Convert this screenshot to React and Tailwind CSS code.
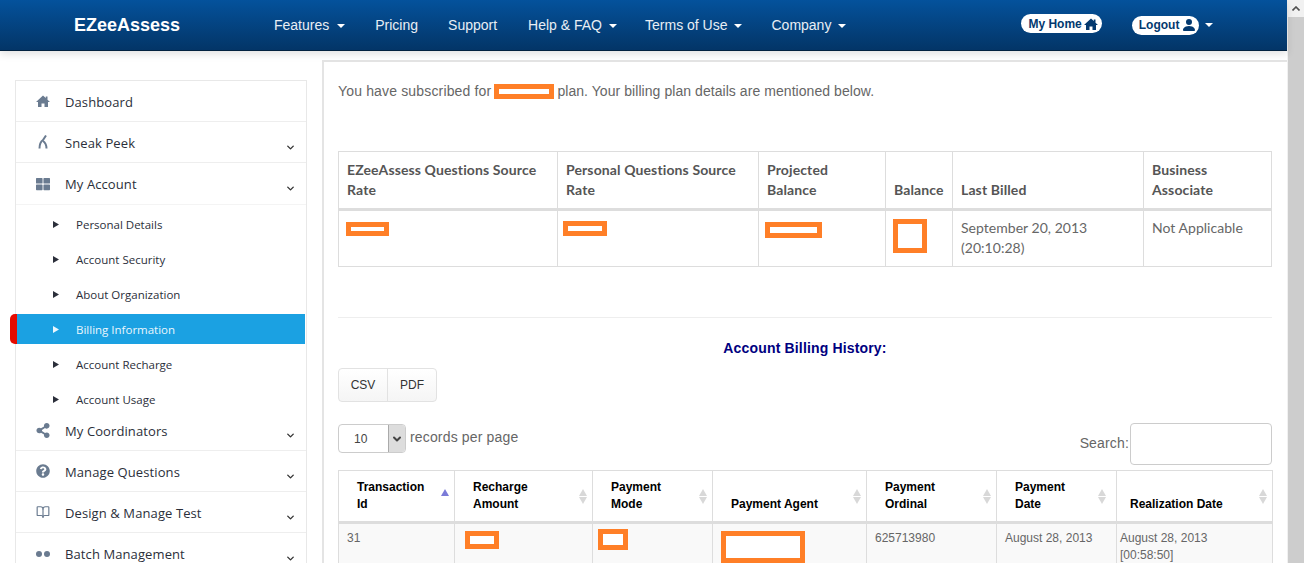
import { FaThLarge, FaShareAlt, FaQuestionCircle } from 'react-icons/fa'
import { BsPersonFill } from 'react-icons/bs'
import { LuBookOpen } from 'react-icons/lu'
import { FiChevronDown } from 'react-icons/fi'

const sans = "font-['Liberation_Sans',Arial,sans-serif]"
const ui = "font-['Open_Sans','Noto_Sans',sans-serif]"
const plan = "font-['Lato','Open_Sans',sans-serif]"

function Caret({ className = 'ml-2' }) {
  return <span className={`inline-block w-0 h-0 align-middle border-x-4 border-x-transparent border-t-4 border-t-white ${className}`} />
}

function NavLink({ label, caret, className = '', caretClass }) {
  return (
    <span className={`text-[14px] text-[#e8eef5] whitespace-nowrap ${className}`}>
      {label}
      {caret && <Caret className={caretClass} />}
    </span>
  )
}

function Redact({ className = '' }) {
  return <span className={`block border-[5px] border-[#ff7f27] bg-white ${className}`} />
}

function House({ size = 14, color = '#6a7b90' }) {
  return (
    <svg width={size} height={size} viewBox="0 0 14 14" fill={color}>
      <path d="M7 1.5 L0 8 H2 V13 H5.5 V9.5 H8.5 V13 H12 V8 H14 L11.5 5.7 V2.5 H9.8 V4 Z" />
    </svg>
  )
}

function Header() {
  return (
    <header className={`h-[51px] shrink-0 flex items-center bg-gradient-to-b from-[#04529c] to-[#033567] border-b border-[#02213f] shadow-[0_3px_8px_rgba(0,0,0,0.12)] relative ${sans}`}>
      <span className="ml-[74px] w-[200px] text-[18px] font-bold text-white">EZeeAssess</span>
      <nav className="flex items-center gap-[30px]">
        <NavLink label="Features" caret />
        <NavLink label="Pricing" />
        <NavLink label="Support" />
        <NavLink label="Help & FAQ" caret caretClass="ml-[7px]" className="ml-[1px]" />
        <NavLink label="Terms of Use" caret caretClass="ml-[7px]" className="-ml-[2px]" />
        <NavLink label="Company" caret caretClass="ml-[7px]" className="-ml-[1px]" />
      </nav>
      <span className="ml-[175px] flex items-center gap-[2px] h-[19px] pl-[7px] pr-[4px] rounded-full bg-white text-[#03396f] text-[12px] font-bold -mt-[3px]">
        My Home <House size={14} color="#03396f" />
      </span>
      <span className="ml-[30px] flex items-center gap-[2px] h-[19px] pl-[7px] pr-[2px] rounded-full bg-white text-[#03396f] text-[12px] font-bold">
        Logout <BsPersonFill className="text-[16px]" />
      </span>
      <Caret className="ml-[6px]" />
    </header>
  )
}

function Dots() {
  return (
    <svg width="14" height="6" viewBox="0 0 14 6" fill="#6a7b90">
      <circle cx="3" cy="3" r="3" />
      <circle cx="11" cy="3" r="3" />
    </svg>
  )
}

function Peek() {
  return (
    <svg width="10" height="14" viewBox="0 0 10 14" fill="none" stroke="#6a7b90" strokeWidth="2">
      <path d="M8 0.5 L5 5 C2 7 1.5 10 1.5 13.5" />
      <path d="M5 6 C8 8 8.5 11 8.5 13.5" />
    </svg>
  )
}

function MenuRow({ icon, label, chevron = true, border = true }) {
  return (
    <div className={`h-[41px] flex items-center pl-[20px] pr-[10px] ${border ? 'border-b border-[#eeeeee]' : ''}`}>
      <span className="w-[14px] flex justify-center text-[#6a7b90] text-[14px]">{icon}</span>
      <span className="ml-[15px] mt-[3px] flex-1 text-[13px] tracking-[0.1px] text-[#2b2f3a]">{label}</span>
      {chevron && <FiChevronDown className="text-[11px] mt-[10px] text-[#333] stroke-[3]" />}
    </div>
  )
}

function SubRow({ label, active }) {
  return (
    <div className={`h-[30px] mb-[5px] last:mb-0 flex items-center relative ${active ? 'ml-[1px] pl-[36px] bg-[#1ba1e2] text-[#eaf6fd] w-[288px]' : 'pl-[37px] text-[#2b2f3a]'}`}>
      {active && <span className="absolute -left-[7px] top-0 w-[7px] h-[30px] bg-[#e60c00] rounded-l-[5px]" />}
      <svg width="6" height="7" viewBox="0 0 6 7" fill="currentColor"><polygon points="0,0 6,3.5 0,7" /></svg>
      <span className="ml-[17px] mt-[1px] text-[11.5px]">{label}</span>
    </div>
  )
}

function Sidebar() {
  return (
    <aside className={`w-[322px] shrink-0 pt-[29px] pl-[15px] ${ui}`}>
      <div className="w-[292px] border border-[#e8e8e8] border-b-0">
        <MenuRow icon={<House />} label="Dashboard" chevron={false} />
        <MenuRow icon={<Peek />} label="Sneak Peek" />
        <MenuRow icon={<FaThLarge />} label="My Account" border={false} />
        <div className="pt-[4px] border-t border-[#f4f4f4]">
          <SubRow label="Personal Details" />
          <SubRow label="Account Security" />
          <SubRow label="About Organization" />
          <SubRow label="Billing Information" active />
          <SubRow label="Account Recharge" />
          <SubRow label="Account Usage" />
        </div>
        <div className="-mt-[4px]">
          <MenuRow icon={<FaShareAlt className="text-[15px]" />} label="My Coordinators" />
        </div>
        <MenuRow icon={<FaQuestionCircle />} label="Manage Questions" />
        <MenuRow icon={<LuBookOpen />} label="Design & Manage Test" />
        <MenuRow icon={<Dots />} label="Batch Management" border={false} />
      </div>
    </aside>
  )
}

function PlanTable() {
  const th = 'border border-[#dddddd] border-b-[3px] px-[8px] py-[8px] align-bottom text-left text-[14px] leading-[20px] font-bold tracking-[0.12px] text-[#555555]'
  const td = 'border border-[#dddddd] px-[8px] pt-[7px] pb-[8px] align-top text-[14px] leading-[20px] tracking-[0.03px] text-[#666666] h-[56px]'
  return (
    <table className={`w-[933px] table-fixed border-collapse mt-[50px] ${plan}`}>
      <colgroup>
        <col className="w-[219px]" />
        <col className="w-[201px]" />
        <col className="w-[127px]" />
        <col className="w-[67px]" />
        <col className="w-[191px]" />
        <col className="w-[128px]" />
      </colgroup>
      <thead>
        <tr>
          <th className={th}>EZeeAssess Questions Source Rate</th>
          <th className={th}>Personal Questions Source Rate</th>
          <th className={th}>Projected Balance</th>
          <th className={th}>Balance</th>
          <th className={th}>Last Billed</th>
          <th className={th}>Business Associate</th>
        </tr>
      </thead>
      <tbody>
        <tr>
          <td className={td}><Redact className="w-[43px] h-[14px] mt-[4px] -ml-[1px]" /></td>
          <td className={td}><Redact className="w-[44px] h-[15px] mt-[3px] -ml-[3px]" /></td>
          <td className={td}><Redact className="w-[57px] h-[16px] mt-[4px] -ml-[2px]" /></td>
          <td className={td}><Redact className="w-[34px] h-[34px] mt-[1px] -ml-[1px] border-[5px]" /></td>
          <td className={td}>September 20, 2013 (20:10:28)</td>
          <td className={td}>Not Applicable</td>
        </tr>
      </tbody>
    </table>
  )
}

function SortIcon({ active, right = 'right-[5px]' }) {
  return (
    <span className={`absolute top-[18px] flex flex-col gap-[1px] ${right}`}>
      <span className={`w-0 h-0 border-x-[4.5px] border-x-transparent border-b-[7px] ${active ? 'border-b-[#7b7bd8]' : 'border-b-[#d8d8d8]'}`} />
      {!active && <span className="w-0 h-0 border-x-[4.5px] border-x-transparent border-t-[7px] border-t-[#d8d8d8]" />}
    </span>
  )
}

function HistoryHead({ children, active, pad = 'pl-[18px] pr-[20px]', right }) {
  return (
    <th className={`relative border border-[#dddddd] border-b-[3px] ${pad} py-[8px] align-bottom text-left text-[12px] leading-[17px] font-bold tracking-normal text-black`}>
      {children}
      <SortIcon active={active} right={right} />
    </th>
  )
}

function HistoryTable() {
  const td = 'border border-[#dddddd] px-[8px] pt-[6px] align-top text-[12px] leading-[17px] tracking-normal text-[#666666]'
  return (
    <table className="w-[934px] table-fixed border-collapse mt-[5px]">
      <colgroup>
        <col className="w-[116px]" />
        <col className="w-[138px]" />
        <col className="w-[120px]" />
        <col className="w-[154px]" />
        <col className="w-[130px]" />
        <col className="w-[120px]" />
        <col className="w-[156px]" />
      </colgroup>
      <thead>
        <tr>
          <HistoryHead active>Transaction Id</HistoryHead>
          <HistoryHead>Recharge Amount</HistoryHead>
          <HistoryHead>Payment Mode</HistoryHead>
          <HistoryHead>Payment Agent</HistoryHead>
          <HistoryHead>Payment Ordinal</HistoryHead>
          <HistoryHead pad="pl-[18px] pr-[30px]" right="right-[10px]">Payment Date</HistoryHead>
          <HistoryHead pad="pl-[13px] pr-[20px]">Realization Date</HistoryHead>
        </tr>
      </thead>
      <tbody>
        <tr className="bg-[#f9f9f9] h-[50px]">
          <td className={td}>31</td>
          <td className={td}><Redact className="w-[34px] h-[18px] ml-[2px] mt-[1px]" /></td>
          <td className={td}><Redact className="w-[30px] h-[21px] -ml-[3px] -mt-[1px]" /></td>
          <td className={td}><Redact className="w-[84px] h-[32px] mt-[1px]" /></td>
          <td className={td}>625713980</td>
          <td className={td}>August 28, 2013</td>
          <td className={`${td} !pl-[3px] whitespace-pre-line`}>{'August 28, 2013\n[00:58:50]'}</td>
        </tr>
      </tbody>
    </table>
  )
}

function Content() {
  return (
    <main className={`mt-[9px] w-[965px] min-w-0 shrink-0 border-l-2 border-t-2 border-[#e4e4e4] pl-[14px] pr-[15px] pt-[19px] text-[14px] tracking-[0.16px] text-[#666666] ${sans}`}>
      <p className="flex items-center h-[20px] whitespace-nowrap">
        You have subscribed for
        <Redact className="w-[60px] h-[15px] mx-[3px] border-[5px]" />
        <span className="tracking-[0.06px]">plan. Your billing plan details are mentioned below.</span>
      </p>
      <PlanTable />
      <hr className="mt-[50px] border-[#eeeeee]" />
      <h3 className="mt-[20px] text-center text-[14px] leading-[20px] font-bold text-[#000080]">Account Billing History:</h3>
      <div className="mt-[10px] flex w-[99px] h-[34px] border border-[#e2e2e2] rounded-[4px] bg-gradient-to-b from-white to-[#f5f5f5] text-[12px] tracking-normal text-[#333333]">
        <span className="w-[49px] flex items-center justify-center border-r border-[#e2e2e2]">CSV</span>
        <span className="flex-1 flex items-center justify-center">PDF</span>
      </div>
      <div className="mt-[21px] flex items-start justify-between">
        <div className="flex items-center mt-[1px]">
          <div className="flex w-[68px] h-[29px] border border-[#cccccc] rounded-[4px] overflow-hidden text-[12px] text-[#444444]">
            <span className="flex-1 flex items-center pl-[15px]">10</span>
            <span className="w-[17px] flex items-center justify-center bg-[#dddddd] border-l border-[#aaaaaa]">
              <FiChevronDown className="text-[12px] stroke-[4] text-[#444444]" />
            </span>
          </div>
          <span className="ml-[4px] -mt-[2px]">records per page</span>
        </div>
        <div className="flex items-center">
          <span className="-mt-[1px]">Search:</span>
          <div className="w-[142px] h-[42px] ml-[1px] border border-[#cccccc] rounded-[4px] bg-white" />
        </div>
      </div>
      <HistoryTable />
    </main>
  )
}

function Scrollbar() {
  return (
    <div className="w-[17px] shrink-0 h-full flex flex-col bg-[#f1f1f1]">
      <div className="h-[17px] flex items-center justify-center">
        <svg width="8" height="5" viewBox="0 0 8 5" fill="none" stroke="#505050" strokeWidth="1.6"><polyline points="0.5,4.5 4,1 7.5,4.5" /></svg>
      </div>
      <div className="flex-1 bg-[#cdcdcd] ml-[1px]" />
    </div>
  )
}

export default function App() {
  return (
    <div className="flex w-[1304px] h-[563px] overflow-hidden bg-white">
      <div className="w-[1287px] shrink-0 flex flex-col">
        <Header />
        <div className="flex">
          <Sidebar />
          <Content />
        </div>
      </div>
      <Scrollbar />
    </div>
  )
}
